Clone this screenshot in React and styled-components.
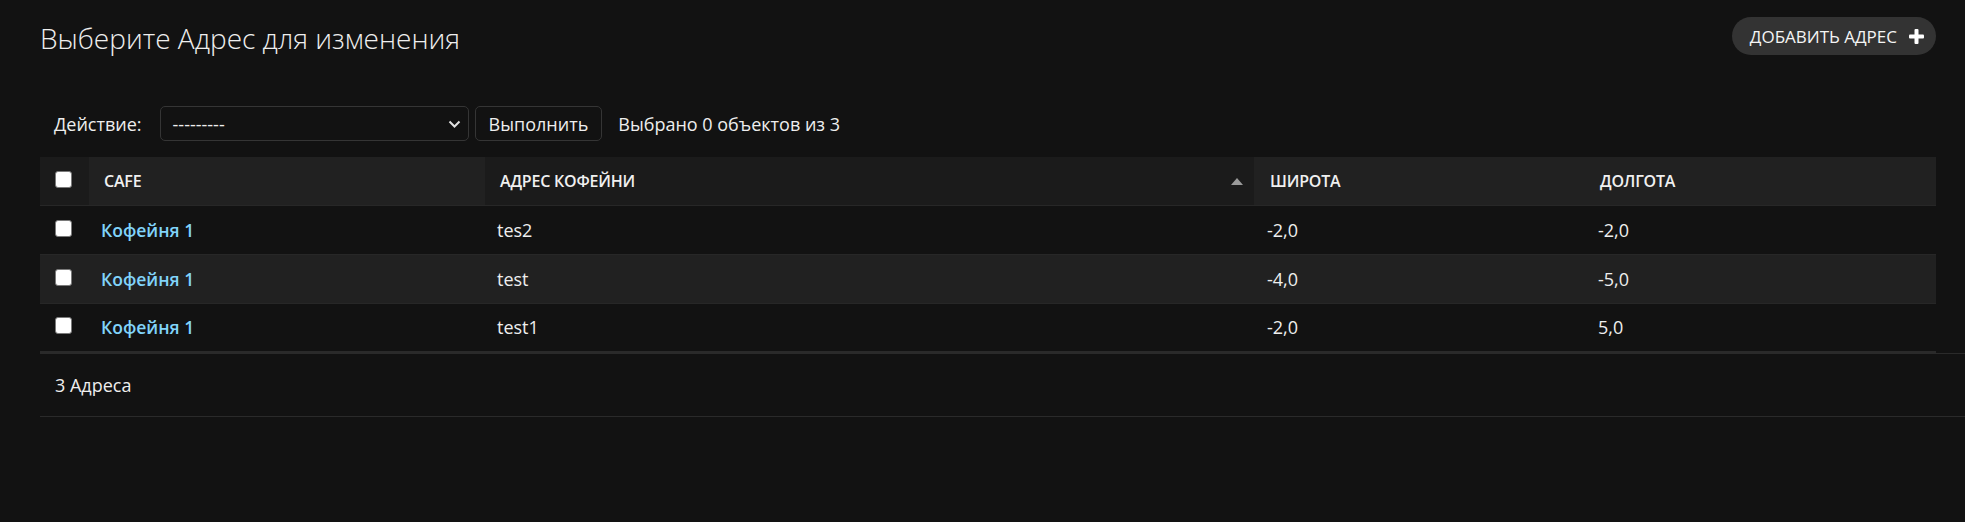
import React from "react";
import styled, { createGlobalStyle } from "styled-components";

const Global = createGlobalStyle`
  html, body { margin: 0; padding: 0; background: #121212; }
  body { font-family: "Open Sans", "Noto Sans", "DejaVu Sans", sans-serif; color: #eeeeee; }
  * { box-sizing: border-box; }
`;

const Page = styled.div`
  min-height: 522px;
  background: #121212;
  padding: 17px 29px 0 40px;
  overflow: hidden;
`;

const TopBar = styled.div`
  display: flex;
  justify-content: space-between;
  align-items: flex-start;
  height: 89px;
`;

const Title = styled.h1`
  margin: 4px 0 0 0;
  font-size: 28px;
  font-weight: 300;
  line-height: 34px;
  color: #eeeeee;
`;

const AddButton = styled.a`
  display: inline-flex;
  align-items: center;
  gap: 12px;
  height: 38px;
  padding: 0 12px 0 18px;
  border-radius: 19px;
  background: #333333;
  color: #f5f5f5;
  font-size: 17px;
  text-transform: uppercase;
  text-decoration: none;
  white-space: nowrap;
`;

const ActionBar = styled.div`
  display: flex;
  align-items: center;
  height: 35px;
  padding-left: 14px;
  margin-bottom: 16px;
  font-size: 18px;
`;

const Label = styled.span`
  margin-right: 18px;
  color: #eeeeee;
`;

const SelectBox = styled.div`
  position: relative;
  display: flex;
  align-items: center;
  width: 309px;
  height: 35px;
  padding: 0 12px;
  border: 1px solid #353535;
  border-radius: 5px;
  background: #121212;
  color: #eeeeee;
  font-size: 18px;
`;

const Chevron = styled.svg`
  position: absolute;
  right: 7px;
  top: 13px;
`;

const RunButton = styled.button`
  height: 35px;
  margin-left: 6px;
  padding: 0 13px;
  border: 1px solid #353535;
  border-radius: 5px;
  background: #121212;
  color: #eeeeee;
  font-family: inherit;
  font-size: 18px;
`;

const Counter = styled.span`
  margin-left: 16px;
  color: #eeeeee;
`;

const Table = styled.table`
  width: 1896px;
  border-collapse: collapse;
  table-layout: fixed;
  border-bottom: 2px solid #2a2a2a;
`;

const HeadCell = styled.th`
  height: 48px;
  padding: 0 0 0 ${(p) => p.$pad || 15}px;
  text-align: left;
  vertical-align: middle;
  background: ${(p) => (p.$dark ? "#1b1b1b" : "#212121")};
  color: #f0f0f0;
  font-size: 16px;
  font-weight: 600;
  letter-spacing: -0.2px;
  text-transform: uppercase;
  white-space: nowrap;
  border-bottom: 1px solid #272727;
  position: relative;
`;

const SortArrow = styled.span`
  position: absolute;
  right: 11px;
  top: 21px;
  width: 0;
  height: 0;
  border-left: 6.5px solid transparent;
  border-right: 6.5px solid transparent;
  border-bottom: 7px solid #9a9a9a;
`;

const Row = styled.tr`
  background: ${(p) => (p.$alt ? "#212121" : "#121212")};
`;

const Cell = styled.td`
  height: 49px;
  padding: 0 0 0 ${(p) => p.$pad || 12}px;
  vertical-align: middle;
  font-size: 18px;
  color: #eeeeee;
  border-bottom: 1px solid #272727;
  white-space: nowrap;
`;

const CheckCell = styled.td`
  padding: 0 0 0 15px;
  vertical-align: middle;
  border-bottom: 1px solid #272727;
`;

const CheckHead = styled.th`
  padding: 0 0 0 15px;
  vertical-align: middle;
  background: #1b1b1b;
  border-bottom: 1px solid #272727;
`;

const Check = styled.span`
  display: block;
  width: 17px;
  height: 17px;
  margin-top: -3px;
  background: #ffffff;
  border: 1.5px solid #7a7a7a;
  border-radius: 3px;
`;

const CafeLink = styled.a`
  color: #81d4fa;
  font-weight: 600;
  font-size: 17.5px;
  text-decoration: none;
`;

const Paginator = styled.div`
  display: flex;
  align-items: center;
  width: calc(100% + 40px);
  height: 64px;
  padding-left: 15px;
  border-top: 1px solid #2a2a2a;
  border-bottom: 1px solid #2a2a2a;
  font-size: 18px;
  color: #eeeeee;
`;

const rows = [
  { addr: "tes2", lat: "-2,0", lon: "-2,0" },
  { addr: "test", lat: "-4,0", lon: "-5,0" },
  { addr: "test1", lat: "-2,0", lon: "5,0" },
];

export default function App() {
  return (
    <>
      <Global />
      <Page>
        <TopBar>
          <Title>Выберите Адрес для изменения</Title>
          <AddButton href="#">
            Добавить Адрес
            <svg width="15" height="15" viewBox="0 0 15 15">
              <rect x="5.5" y="0" width="4" height="15" rx="1" fill="#fff" />
              <rect x="0" y="5.5" width="15" height="4" rx="1" fill="#fff" />
            </svg>
          </AddButton>
        </TopBar>
        <ActionBar>
          <Label>Действие:</Label>
          <SelectBox>
            ---------
            <Chevron width="13" height="9" viewBox="0 0 13 9">
              <path d="M1.5 1.5 L6.5 6.5 L11.5 1.5" stroke="#e0e0e0" strokeWidth="2" fill="none" />
            </Chevron>
          </SelectBox>
          <RunButton>Выполнить</RunButton>
          <Counter>Выбрано 0 объектов из 3</Counter>
        </ActionBar>
        <Table>
          <colgroup>
            <col style={{ width: 49 }} />
            <col style={{ width: 396 }} />
            <col style={{ width: 769 }} />
            <col style={{ width: 332 }} />
            <col style={{ width: 350 }} />
          </colgroup>
          <thead>
            <tr>
              <CheckHead><Check /></CheckHead>
              <HeadCell>Cafe</HeadCell>
              <HeadCell $dark>
                Адрес кофейни
                <SortArrow />
              </HeadCell>
              <HeadCell $pad={16}>Широта</HeadCell>
              <HeadCell $pad={14}>Долгота</HeadCell>
            </tr>
          </thead>
          <tbody>
            {rows.map((r, i) => (
              <Row key={i} $alt={i === 1}>
                <CheckCell><Check /></CheckCell>
                <Cell><CafeLink href="#">Кофейня 1</CafeLink></Cell>
                <Cell>{r.addr}</Cell>
                <Cell $pad={13}>{r.lat}</Cell>
                <Cell $pad={12}>{r.lon}</Cell>
              </Row>
            ))}
          </tbody>
        </Table>
        <Paginator>3 Адреса</Paginator>
      </Page>
    </>
  );
}
